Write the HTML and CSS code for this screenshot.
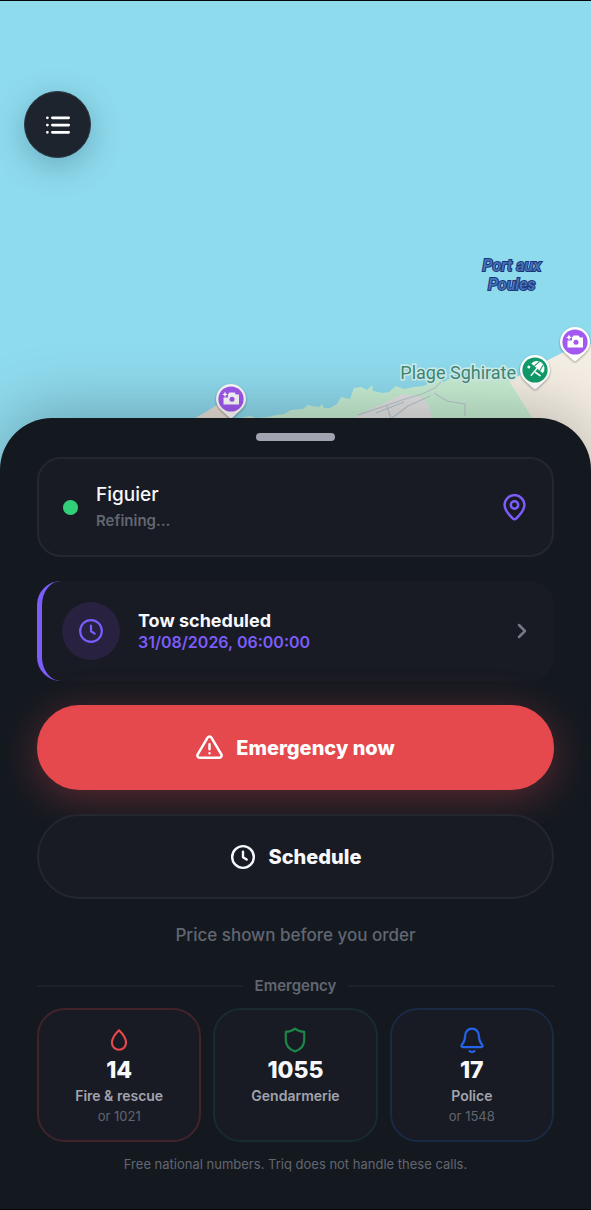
FILE: index.html
```html
<!DOCTYPE html>
<html lang="en">
<head>
    <meta charset="UTF-8">
    <meta name="viewport" content="width=device-width, initial-scale=1.0">
    <title>Triq</title>
    <link rel="stylesheet" href="styles.css">
</head>
<body>
    <svg class="defs" aria-hidden="true">
        <symbol id="icon-clock" viewBox="0 0 24 24">
            <circle cx="12" cy="12" r="10"/>
            <path d="M12 7v5.2l3.4 2.2"/>
        </symbol>
        <symbol id="pin-shape" viewBox="0 0 34 40">
            <path class="pin-body" d="M17 2a15 15 0 0 1 15 15c0 5.500-3 9-6.500 12.200L18.600 35.600a2.300 2.300 0 0 1-3.200 0L8.500 29.200C5 26 2 22.500 2 17A15 15 0 0 1 17 2z"/>
            <circle cx="17" cy="17" r="12.600" fill="currentColor"/>
        </symbol>
        <symbol id="pin-camera" viewBox="0 0 34 40">
            <use href="#pin-shape"/>
            <path fill="#fff" d="M14 12.500l1.500-2h5l1.500 2h3v10H9.500v-7H14z"/>
            <path fill="#fff" d="M11 9.500l.9 2 2 .9-2 .9-.9 2-.9-2-2-.9 2-.9z"/>
            <circle cx="18" cy="17.300" r="2.500" fill="currentColor"/>
        </symbol>
    </svg>

    <main class="screen">
        <section class="map">
            <svg class="terrain" viewBox="0 0 591 469" preserveAspectRatio="xMaxYMax slice" aria-hidden="true">
                <path fill="#e9e1d8" d="M190 420l14-8 13-8 8 4 8 12v49h-43z"/>
                <path fill="#c8efd4" d="M240 469v-52l10-2 6 2 12-1 8-2 8-1 7-4 12-1 5-4 4 1 7 1 3-3 2 4h6l7-4 4-7 9 2 4-11 7-1 6 3 5-5 1 6 10 2 6-1 7-6 8 3 10-2 10-1 9-5 3-3 8 4 8-5 12 2 8-2 16-2 24 2 60 86z"/>
                <path fill="#e3e4e3" d="M352 418l16-9 18-8 16-8 20 3 7 8 3 14v10h-80z"/>
                <path fill="#f4eee4" d="M509 380l17-9 24-13 18-9 23-6v126h-30l-28-51z"/>
                <path fill="none" stroke="#bcc7d0" stroke-width="1.200" d="M358 414l24-8 20-7 20-6 13-6 6-6M387 405l4 13M376 412l28-11M392 417l16-12 22-10M434 392l13 8 18 3v12"/>
            </svg>
            <button class="menu-button" type="button" aria-label="Menu">
                <svg viewBox="0 0 24 24"><path d="M7.500 6.200h13M7.500 12h13M7.500 17.800h13"/><path d="M3.500 6.200h.01M3.500 12h.01M3.500 17.800h.01"/></svg>
            </button>
            <p class="water-label">Port aux<br>Poules</p>
            <p class="place-label">Plage Sghirate</p>
            <svg class="pin pin-beach" viewBox="0 0 34 40" aria-hidden="true">
                <use href="#pin-shape"/>
                <g transform="rotate(40 17 17)">
                    <path fill="#fff" d="M10 14.500a7.500 7.500 0 0 1 15 0z"/>
                    <path fill="none" stroke="#fff" stroke-width="1.500" d="M17.500 14v10"/>
                    <path fill="none" stroke="currentColor" d="M15 7.500l-1 7M20 7.500l1 7"/>
                </g>
                <path fill="none" stroke="#fff" stroke-width="1.700" stroke-linecap="round" d="M17.500 19.500l4.500 3"/>
                <circle cx="10.800" cy="14" r="1.500" fill="#fff"/>
            </svg>
            <svg class="pin pin-east" viewBox="0 0 34 40" aria-hidden="true"><use href="#pin-camera"/></svg>
            <svg class="pin pin-west" viewBox="0 0 34 40" aria-hidden="true"><use href="#pin-camera"/></svg>
        </section>

        <section class="sheet">
            <div class="handle"></div>

            <button class="card location" type="button">
                <span class="status-dot"></span>
                <span class="card-text">
                    <span class="location-name">Figuier</span>
                    <span class="location-status">Refining…</span>
                </span>
                <svg class="icon icon-pin" viewBox="0 0 24 24"><path d="M12 22.500c-.5 0-1-.2-1.400-.6C7.500 18.800 3.200 14.900 3.200 9.800a8.800 8.800 0 0 1 17.600 0c0 5.100-4.300 9-7.400 12.100-.4.400-.9.600-1.400.6z"/><circle cx="12" cy="9.800" r="3.300"/></svg>
            </button>

            <button class="card scheduled" type="button">
                <span class="badge"><svg class="icon icon-clock"><use href="#icon-clock"/></svg></span>
                <span class="card-text">
                    <span class="scheduled-title">Tow scheduled</span>
                    <span class="scheduled-date">31/08/2026, 06:00:00</span>
                </span>
                <svg class="icon icon-chevron" viewBox="0 0 24 24"><path d="M9 6l6 6-6 6"/></svg>
            </button>

            <button class="action action-emergency" type="button">
                <svg class="icon" viewBox="0 0 24 24"><path d="M10.300 3.200L1.500 18.200A2 2 0 0 0 3.200 21.200h17.600a2 2 0 0 0 1.700-3L13.700 3.200a2 2 0 0 0-3.400 0z"/><path d="M12 9v4.500M12 17.200h.01"/></svg>
                Emergency now
            </button>
            <button class="action action-schedule" type="button">
                <svg class="icon icon-clock"><use href="#icon-clock"/></svg>
                Schedule
            </button>

            <p class="price-note">Price shown before you order</p>

            <h2 class="divider">Emergency</h2>
            <div class="numbers">
                <a class="number fire" href="tel:14">
                    <svg class="icon" viewBox="0 0 24 24"><path d="M12 3s-6.500 6.200-6.500 11.500a6.500 6.500 0 0 0 13 0C18.500 9.200 12 3 12 3z"/></svg>
                    <strong>14</strong>
                    <span class="service">Fire &amp; rescue</span>
                    <span class="alt">or 1021</span>
                </a>
                <a class="number gendarmerie" href="tel:1055">
                    <svg class="icon" viewBox="0 0 24 24"><path d="M12 1.500c2.700 2.200 5.300 3 8.500 3V12c0 5.500-3.500 8.800-8.500 10.500C7 20.800 3.500 17.500 3.500 12V4.500c3.200 0 5.800-.8 8.500-3z"/></svg>
                    <strong>1055</strong>
                    <span class="service">Gendarmerie</span>
                </a>
                <a class="number police" href="tel:17">
                    <svg class="icon" viewBox="0 0 24 24"><path d="M12 1.500a6.300 6.300 0 0 0-6.300 6.300c0 5-1.700 7-3.100 8.800-.7.900-.3 1.900.8 1.900h17.200c1.100 0 1.500-1 .8-1.900-1.400-1.800-3.100-3.800-3.100-8.800A6.300 6.300 0 0 0 12 1.500z"/><path d="M9.800 22.200c1.200 1.100 3.200 1.100 4.400 0"/></svg>
                    <strong>17</strong>
                    <span class="service">Police</span>
                    <span class="alt">or 1548</span>
                </a>
            </div>
            <p class="footnote">Free national numbers. Triq does not handle these calls.</p>
        </section>
    </main>
</body>
</html>
```

FILE: styles.css
```css
:root {
    --sea: #8fdbee;
    --sheet-bg: #141920;
    --card-bg: #181b23;
    --line: #23272e;
    --text: #f7f8fc;
    --muted: #a1a4ae;
    --faint: #626671;
    --violet: #7c5cfa;
    --red: #e5484d;
    --green: #1b8748;
    --blue: #2563eb;
}
* {
    box-sizing: border-box;
}
body {
    margin: 0;
    background-color: #05070b;
    color: var(--text);
    font-family: Inter, "Liberation Sans", sans-serif;
}
p, h2 {
    margin: 0;
}
button {
    color: inherit;
    font-family: inherit;
    cursor: pointer;
}
.defs {
    position: absolute;
    width: 0;
    height: 0;
}
.screen {
    min-height: 100vh;
    padding: 1px 0;
    display: flex;
    flex-direction: column;
}

/* map */
.map {
    position: relative;
    flex: 1;
    min-height: 360px;
    margin-bottom: -52px;
    background-color: var(--sea);
    overflow: hidden;
}
.terrain {
    position: absolute;
    inset: 0;
    width: 100%;
    height: 100%;
}
.menu-button {
    position: absolute;
    top: 90px;
    left: 24px;
    width: 67px;
    height: 67px;
    padding: 0;
    display: flex;
    align-items: center;
    justify-content: center;
    border: 1px solid #2c3942;
    border-radius: 50%;
    background-color: #1e242d;
    box-shadow: 0 8px 32px rgba(20, 60, 80, 0.3);
}
.menu-button svg {
    width: 30px;
    height: 30px;
    fill: none;
    stroke: #fff;
    stroke-width: 2.2;
    stroke-linecap: round;
}
.water-label, .place-label {
    position: absolute;
    font-family: Roboto, sans-serif;
    paint-order: stroke fill;
}
.water-label {
    right: 50px;
    bottom: 176px;
    color: #4573b8;
    font-size: 16px;
    font-style: italic;
    font-weight: 500;
    line-height: 19px;
    text-align: center;
    -webkit-text-stroke: 2px #1c3478;
}
.place-label {
    right: 75px;
    bottom: 86px;
    color: #3d8a72;
    font-size: 18px;
    line-height: 22px;
    -webkit-text-stroke: 3px #d3eeee;
}
.pin {
    position: absolute;
    width: 34px;
    height: 40px;
    color: #a259f2;
    filter: drop-shadow(0 1px 1px rgba(0, 0, 0, 0.35));
}
.pin-body {
    fill: #fff;
}
.pin-beach {
    right: 39px;
    bottom: 77px;
    color: #119c6b;
}
.pin-east {
    right: -1px;
    bottom: 105px;
}
.pin-west {
    right: 343px;
    bottom: 48px;
}

/* bottom sheet */
.sheet {
    position: relative;
    padding: 15px 37px 35px;
    display: flex;
    flex-direction: column;
    border-radius: 52px 52px 0 0;
    background-color: var(--sheet-bg);
    box-shadow: 0 -8px 64px rgba(0, 0, 0, 0.25);
}
.handle {
    width: 79px;
    height: 8px;
    margin: 0 auto 16px;
    border-radius: 4px;
    background-color: #a1a4b0;
}
.icon {
    flex: none;
    width: 27px;
    height: 27px;
    fill: none;
    stroke: currentColor;
    stroke-width: 2.2;
    stroke-linecap: round;
    stroke-linejoin: round;
}
.icon-clock {
    width: 26px;
    height: 26px;
}
.card {
    width: 100%;
    min-height: 100px;
    margin-bottom: 24px;
    padding: 0 24px;
    display: flex;
    align-items: center;
    border: 2px solid var(--line);
    border-radius: 24px;
    background-color: var(--card-bg);
    text-align: left;
}
.card-text {
    flex: 1;
    display: flex;
    flex-direction: column;
}
.status-dot {
    width: 15px;
    height: 15px;
    margin-right: 18px;
    border-radius: 50%;
    background-color: #31d078;
}
.location-name {
    margin-bottom: 4px;
    font-size: 19px;
    font-weight: 500;
    line-height: 24px;
}
.location-status {
    color: var(--faint);
    font-size: 15px;
    font-weight: 600;
    line-height: 20px;
}
.icon-pin {
    color: var(--violet);
}
.scheduled {
    border-width: 0 0 0 5px;
    border-color: var(--violet);
    padding-left: 20px;
}
.badge {
    width: 58px;
    height: 58px;
    margin-right: 18px;
    display: flex;
    align-items: center;
    justify-content: center;
    border-radius: 50%;
    background-color: #28213f;
    color: var(--violet);
}
.badge .icon {
    stroke-width: 2;
}
.scheduled-title {
    font-size: 18px;
    font-weight: 700;
    line-height: 22px;
}
.scheduled-date {
    color: var(--violet);
    font-size: 16px;
    font-weight: 600;
    line-height: 20px;
}
.icon-chevron {
    width: 24px;
    height: 24px;
    margin-right: -4px;
    stroke-width: 2.5;
    color: #777a84;
}
.action {
    width: 100%;
    min-height: 85px;
    margin-bottom: 24px;
    padding: 0 24px;
    display: flex;
    align-items: center;
    justify-content: center;
    gap: 13px;
    border: 2px solid var(--line);
    border-radius: 43px;
    background-color: var(--card-bg);
    font-size: 20px;
    font-weight: 800;
}
.action-emergency {
    border-color: var(--red);
    background-color: var(--red);
    color: #fff;
    box-shadow: 0 8px 40px rgba(229, 72, 77, 0.35);
}
.action-schedule {
    position: relative;
}
.price-note {
    margin-bottom: 29px;
    color: var(--faint);
    font-size: 17px;
    font-weight: 500;
    line-height: 24px;
    text-align: center;
}
.divider {
    margin-bottom: 12px;
    display: flex;
    align-items: center;
    gap: 12px;
    color: var(--faint);
    font-size: 15px;
    font-weight: 600;
    line-height: 20px;
}
.divider::before, .divider::after {
    content: "";
    flex: 1;
    height: 2px;
    background-color: #1e232a;
}
.numbers {
    margin-bottom: 12px;
    display: grid;
    grid-template-columns: repeat(3, 1fr);
    gap: 12px;
}
.number {
    min-height: 134px;
    padding: 17px 8px 13px;
    display: flex;
    flex-direction: column;
    align-items: center;
    border: 2px solid;
    border-radius: 28px;
    background-color: var(--card-bg);
    text-decoration: none;
}
.number .icon {
    width: 26px;
    height: 26px;
    stroke-width: 2;
}
.number strong {
    margin-top: 1px;
    color: var(--text);
    font-size: 23px;
    font-weight: 800;
    line-height: 32px;
}
.service {
    color: var(--muted);
    font-size: 14px;
    font-weight: 600;
    line-height: 20px;
}
.alt, .footnote {
    color: var(--faint);
    font-size: 13px;
    line-height: 20px;
}
.fire {
    border-color: #41232c;
    color: var(--red);
}
.gendarmerie {
    border-color: #192b2d;
    color: var(--green);
}
.police {
    border-color: #1a2945;
    color: var(--blue);
}
.footnote {
    text-align: center;
}
```
